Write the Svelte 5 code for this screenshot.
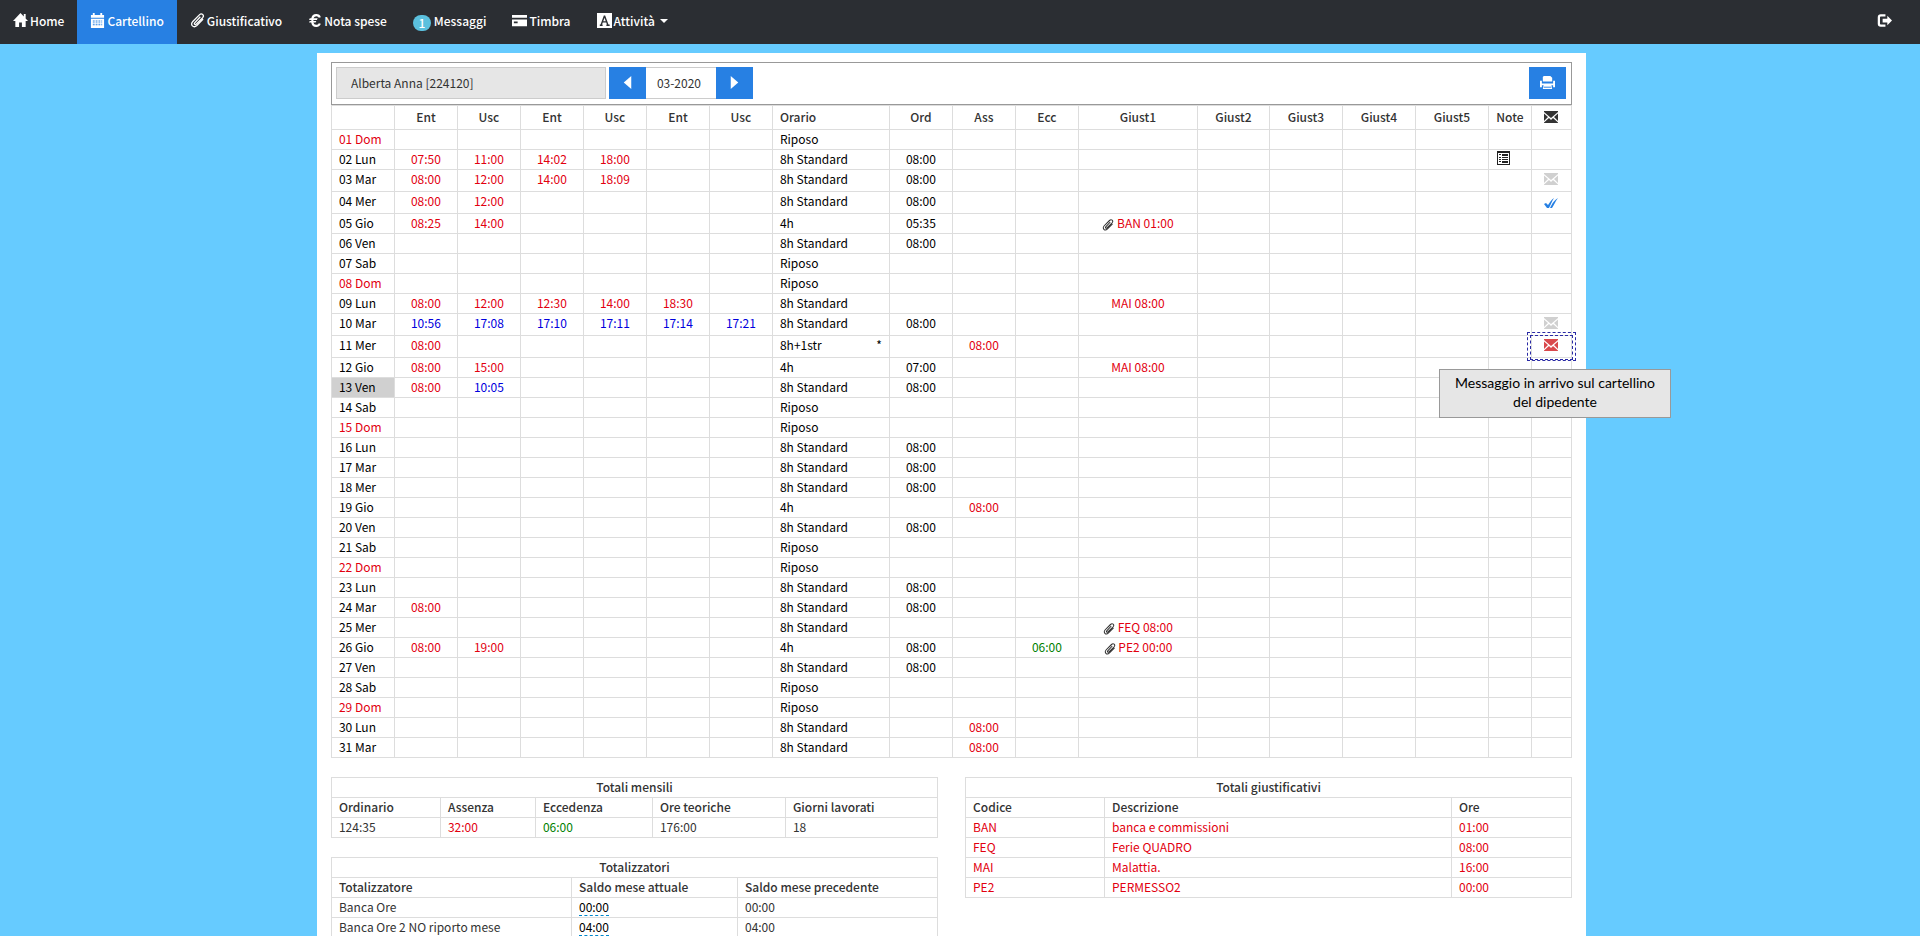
<script>
    const navItems = [
        {label: 'Home', icon: 'home'},
        {label: 'Cartellino', icon: 'calendar', active: true},
        {label: 'Giustificativo', icon: 'clip'},
        {label: 'Nota spese', icon: 'euro'},
        {label: 'Messaggi', badge: 1},
        {label: 'Timbra', icon: 'card'},
        {label: 'Attività', icon: 'font', caret: true}
    ]

    const columns = [
        {label: '', width: 63},
        {label: 'Ent', width: 63},
        {label: 'Usc', width: 63},
        {label: 'Ent', width: 63},
        {label: 'Usc', width: 63},
        {label: 'Ent', width: 63},
        {label: 'Usc', width: 63},
        {label: 'Orario', width: 117, left: true},
        {label: 'Ord', width: 63},
        {label: 'Ass', width: 63},
        {label: 'Ecc', width: 63},
        {label: 'Giust1', width: 119},
        {label: 'Giust2', width: 72},
        {label: 'Giust3', width: 73},
        {label: 'Giust4', width: 73},
        {label: 'Giust5', width: 73},
        {label: 'Note', width: 43},
        {label: '', width: 40, icon: 'mail'}
    ]

    const std = '8h Standard'
    const days = [
        {day: '01 Dom', orario: 'Riposo'},
        {day: '02 Lun', times: ['07:50', '11:00', '14:02', '18:00'], orario: std, ord: '08:00', note: true},
        {day: '03 Mar', times: ['08:00', '12:00', '14:00', '18:09'], orario: std, ord: '08:00', msg: 'read'},
        {day: '04 Mer', times: ['08:00', '12:00'], orario: std, ord: '08:00', msg: 'done'},
        {day: '05 Gio', times: ['08:25', '14:00'], orario: '4h', ord: '05:35', giust: 'BAN 01:00', clip: true},
        {day: '06 Ven', orario: std, ord: '08:00'},
        {day: '07 Sab', orario: 'Riposo'},
        {day: '08 Dom', orario: 'Riposo'},
        {day: '09 Lun', times: ['08:00', '12:00', '12:30', '14:00', '18:30'], orario: std, giust: 'MAI 08:00'},
        {day: '10 Mar', times: ['10:56', '17:08', '17:10', '17:11', '17:14', '17:21'], real: [0, 1, 2, 3, 4, 5], orario: std, ord: '08:00', msg: 'read'},
        {day: '11 Mer', times: ['08:00'], orario: '8h+1str', star: true, ass: '08:00', msg: 'new'},
        {day: '12 Gio', times: ['08:00', '15:00'], orario: '4h', ord: '07:00', giust: 'MAI 08:00'},
        {day: '13 Ven', times: ['08:00', '10:05'], real: [1], orario: std, ord: '08:00', today: true},
        {day: '14 Sab', orario: 'Riposo'},
        {day: '15 Dom', orario: 'Riposo'},
        {day: '16 Lun', orario: std, ord: '08:00'},
        {day: '17 Mar', orario: std, ord: '08:00'},
        {day: '18 Mer', orario: std, ord: '08:00'},
        {day: '19 Gio', orario: '4h', ass: '08:00'},
        {day: '20 Ven', orario: std, ord: '08:00'},
        {day: '21 Sab', orario: 'Riposo'},
        {day: '22 Dom', orario: 'Riposo'},
        {day: '23 Lun', orario: std, ord: '08:00'},
        {day: '24 Mar', times: ['08:00'], orario: std, ord: '08:00'},
        {day: '25 Mer', orario: std, giust: 'FEQ 08:00', clip: true},
        {day: '26 Gio', times: ['08:00', '19:00'], orario: '4h', ord: '08:00', ecc: '06:00', giust: 'PE2 00:00', clip: true},
        {day: '27 Ven', orario: std, ord: '08:00'},
        {day: '28 Sab', orario: 'Riposo'},
        {day: '29 Dom', orario: 'Riposo'},
        {day: '30 Lun', orario: std, ass: '08:00'},
        {day: '31 Mar', orario: std, ass: '08:00'}
    ]

    const giustificativi = [
        ['BAN', 'banca e commissioni', '01:00'],
        ['FEQ', 'Ferie QUADRO', '08:00'],
        ['MAI', 'Malattia.', '16:00'],
        ['PE2', 'PERMESSO2', '00:00']
    ]

    const totalizzatori = [
        ['Banca Ore', '00:00', '00:00'],
        ['Banca Ore 2 NO riporto mese', '04:00', '04:00']
    ]
</script>

{#snippet icon(name)}
    <svg class="icon {name}" viewBox="0 0 16 16" aria-hidden="true">
        {#if name === 'home'}
            <path d="M8 0 0 8.500h2.500V15h4v-5h3v5h4V8.500H16l-2.500-2.700V1h-2v2.700z" />
        {:else if name === 'calendar'}
            <path fill-rule="evenodd" d="M1 2h2V0h2v2h6V0h2v2h2v3H1zM1 6h14v10H1zM3 8v1h2V8zm3 0v1h2V8zm3 0v1h2V8zm3 0v1h1V8zM3 10v1h2v-1zm3 0v1h2v-1zm3 0v1h2v-1zm3 0v1h1v-1zM3 12v1h2v-1zm3 0v1h2v-1zm3 0v1h2v-1zm3 0v1h1v-1z" />
        {:else if name === 'clip'}
            <path class="line" d="M11 4 5 10.500c-1 1.200.5 2.500 1.600 1.400L13.500 5c2.200-2.600-1-5.400-3.500-3L3 9c-3.500 3.600.8 7.600 4.300 4.300L14 6.500" />
        {:else if name === 'euro'}
            <path class="line thick" d="M13.500 4.500C12.500 1 6 .5 5 5.500v5C6 15.500 12.500 15 13.500 11.500" />
            <path d="M2 5.500h9l-.8 1.800H1.200zM2 8.500h7.500l-.8 1.800H1.200z" />
        {:else if name === 'card'}
            <path fill-rule="evenodd" d="M0 2h16v3H0zM0 7h16v7H0zM2 9v2h4V9z" />
        {:else if name === 'font'}
            <path d="M0 0h16v16H0z" />
            <path class="cut" d="M8 3 4.300 13M8 3l3.700 10M5.500 9.500h5M3 13h3M10 13h3.500" />
        {:else if name === 'logout'}
            <path class="line thick" d="M9 2.500H4Q2 2.500 2 4.500v7q0 2 2 2h5" />
            <path d="M6 6h5V3l5 5-5 5v-3H6z" />
        {:else if name === 'prev'}
            <path d="M12 1v14L4 8z" />
        {:else if name === 'next'}
            <path d="M4 1v14l8-7z" />
        {:else if name === 'print'}
            <path d="M4 1h7l2 2v4H3V2zM0 6h2v3h12V6h2v7h-2v-2H2v2H0zM4 10h8l1 5H3z" />
            <path class="gap" d="M3 8h10M4 13h8" />
        {:else if name === 'mail'}
            <path d="M1 2h14v1L8 9 1 3zM1 4.500l4 3.500-4 4zM15 4.500 11 8l4 4zM1 14v-.5l5-4.500 2 2 2-2 5 4.500v.5z" />
        {:else if name === 'list'}
            <path fill-rule="evenodd" d="M1 1h13v14H1zM2 3v11h11V3zM3 4h2v1H3zM6 4h6v2H6zM3 7h2v1H3zM6 7h6v1H6zM3 9h2v1H3zM6 9h6v1H6zM3 11h2v1H3zM6 11h6v2H6z" />
        {:else if name === 'check'}
            <path d="m1 11 2-1 2 2c2-3 3-5 6-7-2 3-3 6-5 10H4zM7 15l1-2c2-4 4-6 7-8-3 4-4 7-6 10z" />
        {/if}
    </svg>
{/snippet}

<nav>
    {#each navItems as item}
        <a href="#{item.label}" class:active={item.active}>
            {#if item.badge}
                <span class="badge">{item.badge}</span>
            {:else}
                {@render icon(item.icon)}
            {/if}
            <span>{item.label}</span>
            {#if item.caret}<span class="caret"></span>{/if}
        </a>
    {/each}
    <a href="#logout" class="logout" aria-label="Esci">{@render icon('logout')}</a>
</nav>

<div class="page">
    <main>
        <div class="toolbar">
            <input class="employee" aria-label="Dipendente" value="Alberta Anna [224120]" readonly>
            <div class="month">
                <button aria-label="Mese precedente">{@render icon('prev')}</button>
                <input aria-label="Mese" value="03-2020">
                <button aria-label="Mese successivo">{@render icon('next')}</button>
            </div>
            <button class="print-button" aria-label="Stampa">{@render icon('print')}</button>
        </div>

        <table class="timecard">
            <colgroup>
                {#each columns as col}
                    <col style="width: {col.width}px">
                {/each}
            </colgroup>
            <thead>
                <tr>
                    {#each columns as col}
                        <th class:left={col.left}>
                            {#if col.icon}{@render icon(col.icon)}{:else}{col.label}{/if}
                        </th>
                    {/each}
                </tr>
            </thead>
            <tbody>
                {#each days as d}
                    <tr class:tall={d.msg}>
                        <td class="left" class:red={d.day.endsWith('Dom')} class:today={d.today}>{d.day}</td>
                        {#each [0, 1, 2, 3, 4, 5] as i}
                            <td class={d.real?.includes(i) ? 'blue' : 'red'}>{d.times?.[i] ?? ''}</td>
                        {/each}
                        <td class="left">
                            <div class="orario">{d.orario}{#if d.star}<span>*</span>{/if}</div>
                        </td>
                        <td>{d.ord ?? ''}</td>
                        <td class="red">{d.ass ?? ''}</td>
                        <td class="green">{d.ecc ?? ''}</td>
                        <td class="red">
                            {#if d.clip}{@render icon('clip')}{/if}
                            {d.giust ?? ''}
                        </td>
                        <td></td>
                        <td></td>
                        <td></td>
                        <td></td>
                        <td class="left">{#if d.note}{@render icon('list')}{/if}</td>
                        <td class="msg {d.msg ?? ''}">
                            {#if d.msg === 'done'}
                                {@render icon('check')}
                            {:else if d.msg}
                                {@render icon('mail')}
                            {/if}
                            {#if d.msg === 'new'}
                                <div class="focus"></div>
                                <div class="tooltip" role="tooltip">Messaggio in arrivo sul cartellino del dipedente</div>
                            {/if}
                        </td>
                    </tr>
                {/each}
            </tbody>
        </table>

        <div class="totals">
            <div class="column">
                <table>
                    <colgroup>
                        <col style="width: 109px">
                        <col style="width: 95px">
                        <col style="width: 117px">
                        <col style="width: 133px">
                        <col style="width: 152px">
                    </colgroup>
                    <thead>
                        <tr><th class="title" colspan="5">Totali mensili</th></tr>
                        <tr>
                            <th>Ordinario</th>
                            <th>Assenza</th>
                            <th>Eccedenza</th>
                            <th>Ore teoriche</th>
                            <th>Giorni lavorati</th>
                        </tr>
                    </thead>
                    <tbody>
                        <tr>
                            <td>124:35</td>
                            <td class="red">32:00</td>
                            <td class="green">06:00</td>
                            <td>176:00</td>
                            <td>18</td>
                        </tr>
                    </tbody>
                </table>

                <table>
                    <colgroup>
                        <col style="width: 240px">
                        <col style="width: 166px">
                        <col style="width: 200px">
                    </colgroup>
                    <thead>
                        <tr><th class="title" colspan="3">Totalizzatori</th></tr>
                        <tr>
                            <th>Totalizzatore</th>
                            <th>Saldo mese attuale</th>
                            <th>Saldo mese precedente</th>
                        </tr>
                    </thead>
                    <tbody>
                        {#each totalizzatori as [name, current, previous]}
                            <tr>
                                <td>{name}</td>
                                <td><a class="editable" href="#saldo">{current}</a></td>
                                <td>{previous}</td>
                            </tr>
                        {/each}
                    </tbody>
                </table>
            </div>

            <div class="column">
                <table>
                    <colgroup>
                        <col style="width: 139px">
                        <col style="width: 347px">
                        <col style="width: 120px">
                    </colgroup>
                    <thead>
                        <tr><th class="title" colspan="3">Totali giustificativi</th></tr>
                        <tr>
                            <th>Codice</th>
                            <th>Descrizione</th>
                            <th>Ore</th>
                        </tr>
                    </thead>
                    <tbody>
                        {#each giustificativi as row}
                            <tr>
                                {#each row as cell}
                                    <td class="red">{cell}</td>
                                {/each}
                            </tr>
                        {/each}
                    </tbody>
                </table>
            </div>
        </div>
    </main>
</div>

<style>
    :global(body) {
        background: #66cbff;
        color: #333;
        font-family: "Noto Sans CJK SC", "Open Sans", sans-serif;
        font-size: 12px;
        line-height: 18px;
    }

    * {
        box-sizing: border-box;
    }

    .icon {
        width: 16px;
        height: 16px;
        fill: currentColor;
        flex: none;
    }

    .line {
        fill: none;
        stroke: currentColor;
        stroke-width: 1.4;
    }

    .thick {
        stroke-width: 2.4;
    }

    .cut {
        fill: none;
        stroke: #2b2e33;
        stroke-width: 1.5;
    }

    .gap {
        fill: none;
        stroke: #2780e3;
    }

    nav {
        display: flex;
        height: 44px;
        background: #2b2e33;
    }

    nav a {
        display: flex;
        align-items: center;
        gap: 2px;
        padding: 0 13px 2px;
        color: #fff;
        font-weight: 500;
        text-decoration: none;
    }

    nav a.active {
        background: #2780e3;
    }

    nav a.logout {
        margin-left: auto;
        padding-right: 28px;
    }

    nav .icon {
        width: 15px;
        height: 15px;
        margin-bottom: 2px;
    }

    nav .euro {
        width: 14px;
    }

    .badge {
        width: 18px;
        margin: 4px 1px 0 0;
        border-radius: 9px;
        background: #5bc0de;
        line-height: 16px;
        text-align: center;
    }

    .caret {
        margin-left: 3px;
        border: 4px solid transparent;
        border-top-color: #fff;
        border-bottom: 0;
    }

    .page {
        display: grid;
        grid-template-columns: 317fr 1269fr 334fr;
        padding-top: 9px;
    }

    main {
        grid-column: 2;
        min-height: calc(100vh - 53px);
        padding: 9px 14px 0;
        background: #fff;
    }

    .toolbar {
        display: flex;
        gap: 3px;
        padding: 4px 5px 4px 4px;
        border: 1px solid #999;
        height: 43px;
    }

    input {
        height: 32px;
        padding: 0 14px 2px;
        border: 1px solid #ccc;
        background: #fff;
        color: #333;
        font: inherit;
    }

    .employee {
        width: 270px;
        background: #e6e6e6;
    }

    .month {
        display: flex;
    }

    .month input {
        width: 70px;
        padding: 0 4px 2px 0;
        border-width: 1px 0;
        text-align: center;
    }

    button {
        display: flex;
        justify-content: center;
        align-items: center;
        width: 37px;
        height: 32px;
        padding: 0 0 2px;
        border: 0;
        background: #2780e3;
        color: #fff;
    }

    button .icon {
        width: 15px;
        height: 15px;
    }

    .print-button {
        margin-left: auto;
    }

    table {
        width: 100%;
        table-layout: fixed;
        border-collapse: collapse;
    }

    th, td {
        height: 20px;
        padding: 0 7px;
        border: 1px solid #ddd;
        line-height: 17px;
        text-align: left;
        vertical-align: top;
        white-space: nowrap;
    }

    th {
        font-weight: 500;
    }

    th.title {
        text-align: center;
    }

    .timecard {
        color: #000;
    }

    .timecard th {
        height: 24px;
        padding: 0;
        color: #333;
        line-height: 21px;
        text-align: center;
    }

    .timecard td {
        padding: 0;
        text-align: center;
    }

    .timecard .left {
        padding: 0 7px;
        text-align: left;
    }

    .timecard .icon {
        vertical-align: top;
    }

    .timecard .clip {
        width: 12px;
        height: 12px;
        color: #333;
        vertical-align: middle;
    }

    .tall td {
        height: 22px;
    }

    td.red {
        color: #e2000f;
    }

    td.blue {
        color: #00d;
    }

    td.green {
        color: green;
    }

    td .list {
        color: #222;
    }

    td.today {
        background: #d0d0d0;
    }

    .orario {
        display: flex;
        justify-content: space-between;
    }

    th .mail {
        margin-top: 3px;
    }

    .msg .icon {
        margin-top: 1px;
    }

    .msg {
        position: relative;
        color: #d0d0d0;
    }

    .msg.done {
        color: #2780e3;
    }

    .msg.new {
        color: #d9484c;
    }

    .focus {
        position: absolute;
        inset: -4px -5px;
        padding: 2px;
        border: 1px dashed #2a2aa5;
    }

    .focus::before {
        content: '';
        display: block;
        height: 100%;
        border: 1px dashed #2a2aa5;
    }

    .tooltip {
        position: absolute;
        top: 33px;
        right: -100px;
        z-index: 1;
        width: 232px;
        padding: 3px 12px 6px;
        border: 1px solid #999;
        background: #e6e6e6;
        color: #000;
        font-family: Lato, "Open Sans", sans-serif;
        font-size: 14px;
        line-height: 19px;
        white-space: normal;
    }

    .totals {
        display: grid;
        grid-template-columns: 1fr 1fr;
        gap: 27px;
        margin-top: 19px;
    }

    .column table + table {
        margin-top: 19px;
    }

    .editable {
        border-bottom: 1px dashed #08c;
        color: #000;
        text-decoration: none;
    }
</style>
